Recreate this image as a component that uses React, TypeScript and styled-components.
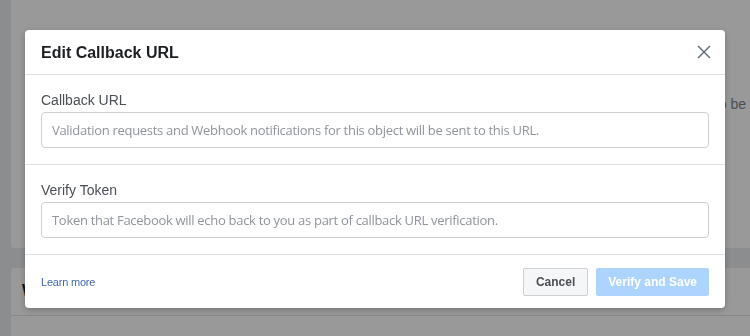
import React from "react";
import styled, { createGlobalStyle } from "styled-components";

const Global = createGlobalStyle`
  html, body { margin: 0; padding: 0; }
  body {
    width: 750px;
    height: 336px;
    overflow: hidden;
    background: #e9ebee;
    font-family: "Liberation Sans", Arial, sans-serif;
  }
`;

const Page = styled.div`
  display: flex;
  flex-direction: column;
  gap: 20px;
  padding-left: 11px;
  width: 780px;
`;

const Card = styled.div<{ $h: number; $top?: boolean }>`
  background: #fff;
  height: ${(p) => p.$h}px;
  border-radius: ${(p) => (p.$top ? "3px 3px 0 0" : "0 0 3px 3px")};
  box-sizing: border-box;
`;

const CardText = styled.div`
  padding: 96px 45px 0 0;
  text-align: right;
  white-space: nowrap;
  font-size: 14px;
  color: #7d838c;
`;

const CardHeader = styled.div`
  height: 48px;
  box-sizing: border-box;
  border-bottom: 1px solid #dddfe2;
  padding: 14px 11px;
  font-size: 16px;
  font-weight: bold;
  color: #1c1e21;
`;

const Overlay = styled.div`
  position: fixed;
  inset: 0;
  background: rgba(0, 0, 0, 0.4);
`;

const Modal = styled.div`
  position: fixed;
  left: 25px;
  top: 30px;
  width: 700px;
  background: #fff;
  border-radius: 4px;
  box-shadow: 0 2px 6px rgba(0, 0, 0, 0.25);
  display: flex;
  flex-direction: column;
`;

const Header = styled.div`
  height: 45px;
  box-sizing: border-box;
  border-bottom: 1px solid #dddfe2;
  padding: 0 12px 0 16px;
  display: flex;
  align-items: center;
  justify-content: space-between;
`;

const Title = styled.div`
  font-size: 16px;
  font-weight: bold;
  color: #1c1e21;
  margin-top: 1px;
`;

const Close = styled.button`
  border: 0;
  background: none;
  padding: 0;
  width: 18px;
  height: 18px;
  display: flex;
  align-items: center;
  justify-content: center;
  cursor: pointer;
`;

const Section = styled.div`
  padding: 16px;
  border-bottom: 1px solid #dddfe2;
  display: flex;
  flex-direction: column;
`;

const Label = styled.label`
  font-size: 14px;
  line-height: 18px;
  color: #4b4f56;
  margin-bottom: 3px;
`;

const Input = styled.input`
  height: 36px;
  box-sizing: border-box;
  border: 1px solid #ccd0d5;
  border-radius: 4px;
  padding: 0 10px;
  font-family: "Open Sans", "Noto Sans", sans-serif;
  font-size: 13px;
  letter-spacing: -0.3px;
  color: #1c1e21;
  outline: none;
  &::placeholder {
    color: #90949c;
  }
`;

const Footer = styled.div`
  height: 53px;
  box-sizing: border-box;
  padding: 0 16px;
  display: flex;
  align-items: center;
  justify-content: space-between;
`;

const Learn = styled.a`
  font-size: 11px;
  letter-spacing: -0.2px;
  color: #4267b2;
  text-decoration: none;
  font-family: "Liberation Sans", Arial, sans-serif;
`;

const Buttons = styled.div`
  display: flex;
  gap: 8px;
`;

const Button = styled.button<{ $primary?: boolean }>`
  height: 28px;
  box-sizing: border-box;
  border-radius: 2px;
  font-family: "Liberation Sans", Arial, sans-serif;
  font-weight: bold;
  font-size: 12px;
  padding: 0 ${(p) => (p.$primary ? 11 : 12)}px;
  border: 1px solid ${(p) => (p.$primary ? "#add3ff" : "#ccd0d5")};
  background: ${(p) => (p.$primary ? "#add3ff" : "#f5f6f7")};
  color: ${(p) => (p.$primary ? "#fff" : "#4b4f56")};
`;

export default function App() {
  return (
    <>
      <Global />
      <Page>
        <Card $h={248}>
          <CardText>Each object must have a callback URL where updates need to be</CardText>
        </Card>
        <Card $h={100} $top>
          <CardHeader>Webhooks</CardHeader>
        </Card>
      </Page>
      <Overlay />
      <Modal>
        <Header>
          <Title>Edit Callback URL</Title>
          <Close aria-label="Close">
            <svg width="14" height="14" viewBox="0 0 14 14">
              <path d="M1 1 L13 13 M13 1 L1 13" stroke="#606770" strokeWidth="1.4" fill="none" />
            </svg>
          </Close>
        </Header>
        <Section>
          <Label>Callback URL</Label>
          <Input placeholder="Validation requests and Webhook notifications for this object will be sent to this URL." />
        </Section>
        <Section>
          <Label>Verify Token</Label>
          <Input placeholder="Token that Facebook will echo back to you as part of callback URL verification." />
        </Section>
        <Footer>
          <Learn href="#">Learn more</Learn>
          <Buttons>
            <Button>Cancel</Button>
            <Button $primary>Verify and Save</Button>
          </Buttons>
        </Footer>
      </Modal>
    </>
  );
}
